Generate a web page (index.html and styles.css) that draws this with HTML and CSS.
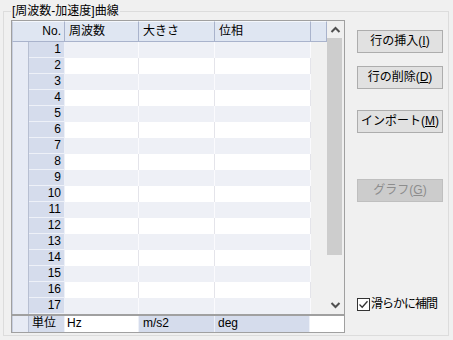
FILE: index.html
```html
<!DOCTYPE html>
<html lang="ja">
<head>
<meta charset="utf-8">
<link rel="stylesheet" href="styles.css">
</head>
<body>
<fieldset class="group">
  <legend class="group-title">[周波数-加速度]曲線</legend>
  <div class="layout">
    <div class="grid">
      <div class="main">
        <div class="table">
          <div class="head">
            <div class="hcell hno">No.</div>
            <div class="hcell">周波数</div>
            <div class="hcell">大きさ</div>
            <div class="hcell">位相</div>
            <div class="hcell hblank"></div>
          </div>
          <div class="row odd"><div class="ind"></div><div class="num">1</div><div class="cell"></div><div class="cell"></div><div class="cell"></div></div>
          <div class="row even"><div class="ind"></div><div class="num">2</div><div class="cell"></div><div class="cell"></div><div class="cell"></div></div>
          <div class="row odd"><div class="ind"></div><div class="num">3</div><div class="cell"></div><div class="cell"></div><div class="cell"></div></div>
          <div class="row even"><div class="ind"></div><div class="num">4</div><div class="cell"></div><div class="cell"></div><div class="cell"></div></div>
          <div class="row odd"><div class="ind"></div><div class="num">5</div><div class="cell"></div><div class="cell"></div><div class="cell"></div></div>
          <div class="row even"><div class="ind"></div><div class="num">6</div><div class="cell"></div><div class="cell"></div><div class="cell"></div></div>
          <div class="row odd"><div class="ind"></div><div class="num">7</div><div class="cell"></div><div class="cell"></div><div class="cell"></div></div>
          <div class="row even"><div class="ind"></div><div class="num">8</div><div class="cell"></div><div class="cell"></div><div class="cell"></div></div>
          <div class="row odd"><div class="ind"></div><div class="num">9</div><div class="cell"></div><div class="cell"></div><div class="cell"></div></div>
          <div class="row even"><div class="ind"></div><div class="num">10</div><div class="cell"></div><div class="cell"></div><div class="cell"></div></div>
          <div class="row odd"><div class="ind"></div><div class="num">11</div><div class="cell"></div><div class="cell"></div><div class="cell"></div></div>
          <div class="row even"><div class="ind"></div><div class="num">12</div><div class="cell"></div><div class="cell"></div><div class="cell"></div></div>
          <div class="row odd"><div class="ind"></div><div class="num">13</div><div class="cell"></div><div class="cell"></div><div class="cell"></div></div>
          <div class="row even"><div class="ind"></div><div class="num">14</div><div class="cell"></div><div class="cell"></div><div class="cell"></div></div>
          <div class="row odd"><div class="ind"></div><div class="num">15</div><div class="cell"></div><div class="cell"></div><div class="cell"></div></div>
          <div class="row even"><div class="ind"></div><div class="num">16</div><div class="cell"></div><div class="cell"></div><div class="cell"></div></div>
          <div class="row odd"><div class="ind"></div><div class="num">17</div><div class="cell"></div><div class="cell"></div><div class="cell"></div></div>
        </div>
        <div class="scrollbar">
          <div class="arrow">
            <svg width="17" height="17" viewBox="0 0 17 17"><path d="M4.5 11 L8.5 7 L12.5 11" fill="none" stroke="#505050" stroke-width="2"/></svg>
          </div>
          <div class="thumb"></div>
          <div class="track"></div>
          <div class="arrow">
            <svg width="17" height="17" viewBox="0 0 17 17"><path d="M4.5 6 L8.5 10 L12.5 6" fill="none" stroke="#505050" stroke-width="2"/></svg>
          </div>
        </div>
      </div>
      <div class="unit">
        <div class="ind"></div>
        <div class="ucell ulabel">単位</div>
        <div class="ucell uwhite">Hz</div>
        <div class="ucell">m/s2</div>
        <div class="ucell udeg">deg</div>
        <div class="ucell urest"></div>
      </div>
    </div>
    <div class="side">
      <button class="btn b1">行の挿入(<u>I</u>)</button>
      <button class="btn b2">行の削除(<u>D</u>)</button>
      <button class="btn b3">インポート(<u>M</u>)</button>
      <button class="btn b4" disabled>グラフ(<u>G</u>)</button>
      <label class="check">
        <span class="box"><svg width="11" height="11" viewBox="0 0 11 11"><path d="M1.5 5.5 L4.2 8.2 L9.5 2.2" fill="none" stroke="#333" stroke-width="1.3"/></svg></span>
        <span class="check-text">滑らかに補間</span>
      </label>
    </div>
  </div>
</fieldset>
</body>
</html>
```
FILE: styles.css
```css
* { box-sizing: border-box; }
html, body { margin: 0; padding: 0; }
body {
  width: 453px;
  height: 340px;
  background: #f0f0f0;
  font-family: "Liberation Sans", "Noto Sans CJK JP", sans-serif;
  font-size: 12px;
  color: #000;
  overflow: hidden;
}
.group {
  margin: 4px 4px 0 3px;
  padding: 2px 0 2px 7px;
  border: 1px solid #dcdcdc;
  width: 446px;
}
.group-title {
  padding: 0 1px;
  margin: 0;
  font-size: 12px;
  line-height: 14px;
  height: 14px;
}
.layout {
  display: flex;
  gap: 12px;
}
.grid {
  width: 334px;
  height: 313px;
  border: 1px solid #a0a0a0;
  background: #f0f0f0;
  display: flex;
  flex-direction: column;
}
.main {
  display: flex;
  height: 293px;
}
.table {
  width: 315px;
  display: flex;
  flex-direction: column;
}
.head {
  display: grid;
  grid-template-columns: 53px 74px 76px 96px 16px;
  height: 21px;
  background: #dfe6f2;
}
.hcell {
  border-right: 1px solid #a9b3cc;
  border-bottom: 1px solid #a9b3cc;
  border-top: 1px solid #f4f7fc;
  line-height: 19px;
  padding-left: 4px;
  white-space: nowrap;
  overflow: hidden;
}
.hno {
  text-align: right;
  padding-right: 3px;
  border-left: 1px solid #c3cbdd;
}
.hblank { padding: 0; }
.row {
  display: grid;
  grid-template-columns: 17px 36px 74px 76px 96px;
  height: 16px;
}
.ind {
  background: #e7ebf5;
  border-left: 1px solid #c8cfe0;
  border-right: 1px solid #b7bfd2;
}
.num {
  background: #d5dcec;
  border-bottom: 1px solid #eef1f8;
  border-right: 1px solid #eef1f8;
  text-align: right;
  padding-right: 3px;
  line-height: 15px;
}
.cell { border-right: 1px solid #e4e4ea; }
.row.odd .cell { background: #eef0f6; border-right-color: #fafafd; }
.row.even .cell { background: #ffffff; }
.scrollbar {
  width: 17px;
  display: flex;
  flex-direction: column;
  background: #f0f0f0;
}
.arrow { height: 17px; }
.arrow svg { display: block; }
.thumb {
  height: 217px;
  width: 15px;
  background: #cdcdcd;
}
.track { flex: 1; }
.unit {
  display: grid;
  grid-template-columns: 17px 36px 74px 76px 95px 34px;
  height: 18px;
  border-top: 2px solid #a0a0a0;
}
.unit .ind { height: 16px; }
.ucell {
  background: #d5dcec;
  line-height: 15px;
  height: 16px;
  padding-left: 4px;
  border-right: 1px solid #eef1f8;
}
.ulabel { padding-left: 3px; }
.uwhite { background: #fff; padding-left: 2px; }
.udeg { padding-left: 3px; }
.urest { background: #fff; border: 0; }
.side {
  display: flex;
  flex-direction: column;
  width: 86px;
}
.btn {
  font-family: "Liberation Sans", "Noto Sans CJK JP", sans-serif;
  font-size: 12px;
  height: 23px;
  width: 86px;
  padding: 0;
  line-height: 21px;
  background: #e1e1e1;
  border: 1px solid #adadad;
  color: #000;
  white-space: nowrap;
}
.btn u { text-underline-offset: 1px; }
.b1 { margin-top: 10px; }
.b2 { margin-top: 13px; }
.b3 { margin-top: 21px; }
.b4 {
  margin-top: 46px;
  background: #cccccc;
  border-color: #bfbfbf;
  color: #8d8d8d;
}
.check {
  margin-top: 95px;
  display: flex;
  align-items: center;
  height: 14px;
  white-space: nowrap;
}
.box {
  width: 13px;
  height: 13px;
  border: 1px solid #333;
  background: #fff;
  display: flex;
  flex: none;
}
.box svg { display: block; }
.check-text {
  margin-left: 1px;
  letter-spacing: -1px;
  line-height: 14px;
}
```
